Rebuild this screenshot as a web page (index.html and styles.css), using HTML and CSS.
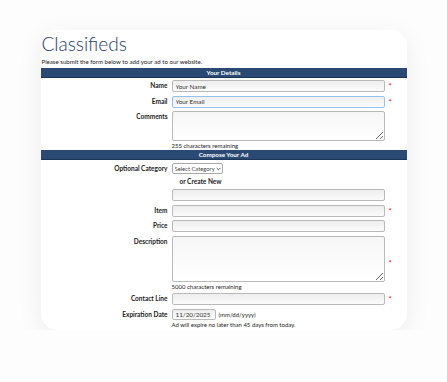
FILE: index.html
```html
<!DOCTYPE html>
<html lang="en">
<head>
    <meta charset="UTF-8">
    <title>Classifieds</title>
    <link rel="stylesheet" href="styles.css">
</head>
<body>
    <div class="card">
        <h1>Classifieds</h1>
        <p class="intro">Please submit the form below to add your ad to our website.</p>

        <div class="bar">Your Details</div>
        <div class="grid first">
            <label for="name">Name</label>
            <input type="text" id="name" value="Your Name">
            <span class="req">*</span>

            <label for="email">Email</label>
            <input type="text" id="email" class="focus" value="Your Email">
            <span class="req">*</span>

            <label for="comments">Comments</label>
            <div class="field">
                <textarea id="comments" class="short"></textarea>
                <div class="note">255 characters remaining</div>
            </div>
            <span></span>
        </div>

        <div class="bar">Compose Your Ad</div>
        <div class="grid second">
            <label for="category">Optional Category</label>
            <div class="field">
                <span class="select-wrap">
                    <select id="category"><option>Select Category</option></select>
                    <svg class="chevron" width="5" height="4" viewBox="0 0 5 4"><path d="M0.7 1 L2.5 2.8 L4.3 1" fill="none" stroke="#444" stroke-width="0.9"/></svg>
                </span>
            </div>
            <span></span>

            <span></span>
            <div class="create">or Create New</div>
            <span></span>

            <span></span>
            <input type="text" id="newcat">
            <span></span>

            <label for="item">Item</label>
            <input type="text" id="item">
            <span class="req">*</span>

            <label for="price">Price</label>
            <input type="text" id="price">
            <span></span>

            <label for="desc">Description</label>
            <div class="field">
                <textarea id="desc" class="tall"></textarea>
                <div class="note">5000 characters remaining</div>
            </div>
            <span class="req mid">*</span>

            <label for="contact">Contact Line</label>
            <input type="text" id="contact">
            <span class="req">*</span>

            <label for="expires">Expiration Date</label>
            <div class="field">
                <div class="date-row">
                    <input type="text" id="expires" class="date" value="11/20/2025">
                    <span class="hint">(mm/dd/yyyy)</span>
                </div>
                <div class="note">Ad will expire no later than 45 days from today.</div>
            </div>
            <span></span>
        </div>
    </div>
</body>
</html>
```

FILE: styles.css
```css
body {
    margin: 0;
    padding: 30px 0 0;
    background-color: #fdfdfd;
    font-family: Lato, "Noto Sans", sans-serif;
    font-size: 6.5px;
    color: #222;
}

/* tarjeta principal */
.card {
    width: 366px;
    height: 300px;
    margin: 0 auto;
    background: #fff;
    border-radius: 16px;
    overflow: hidden;
    box-shadow: 0 6px 26px rgba(0, 0, 0, 0.07);
}

h1 {
    margin: 4px 0 0 1px;
    font-size: 19px;
    font-weight: 300;
    color: #1e3a68;
    line-height: 20px;
}

.intro {
    margin: 4px 0 2px 1px;
    font-size: 6.1px;
    line-height: 8px;
    color: #222;
}

.bar {
    box-sizing: border-box;
    background-color: #2a4a74;
    border-bottom: 1px solid #1b3558;
    color: #fff;
    font-weight: bold;
    text-align: center;
    height: 10px;
    line-height: 9px;
    font-size: 6.3px;
}

.grid {
    display: grid;
    grid-template-columns: 127px 213px 1fr;
    column-gap: 4px;
    row-gap: 3.5px;
    align-items: start;
}

.grid.first {
    padding: 2px 0 1px;
}

.grid.second {
    padding: 3px 0 0;
}

label {
    text-align: right;
    font-weight: bold;
    line-height: 11px;
    white-space: nowrap;
}

input, textarea, select {
    font-family: inherit;
    font-size: 6.3px;
    color: #333;
    box-sizing: border-box;
    margin: 0;
}

input, textarea {
    display: block;
    width: 100%;
    height: 12px;
    padding: 0 3px;
    border: 1px solid #b9b9b9;
    border-radius: 2px;
    background: linear-gradient(#eeeeee, #fbfbfb);
}

input.focus {
    border-color: #92c2ee;
}

textarea {
    resize: vertical;
    background: linear-gradient(#f6f6f6, #ffffff);
}

textarea.short {
    height: 30px;
}

textarea.tall {
    height: 46px;
}

.select-wrap {
    position: relative;
    display: inline-block;
}

select {
    display: block;
    -webkit-appearance: none;
    appearance: none;
    height: 11px;
    width: 51px;
    padding: 0 6px 0 2px;
    border: 1px solid #a9a9a9;
    border-radius: 2px;
    background: #fff;
    font-size: 5.8px;
    color: #444;
}

.chevron {
    position: absolute;
    right: 2px;
    top: 4px;
}

.note {
    margin-top: 1px;
    line-height: 7px;
    font-size: 6px;
}

.req {
    color: #d9141c;
    font-size: 8px;
    line-height: 12px;
}

.req.mid {
    align-self: center;
}

.create {
    padding-left: 8px;
    font-weight: bold;
    line-height: 8px;
}

.date-row {
    display: flex;
    align-items: center;
    gap: 3px;
}

input.date {
    width: 44px;
    height: 11px;
}

.hint {
    font-size: 6px;
}
```
